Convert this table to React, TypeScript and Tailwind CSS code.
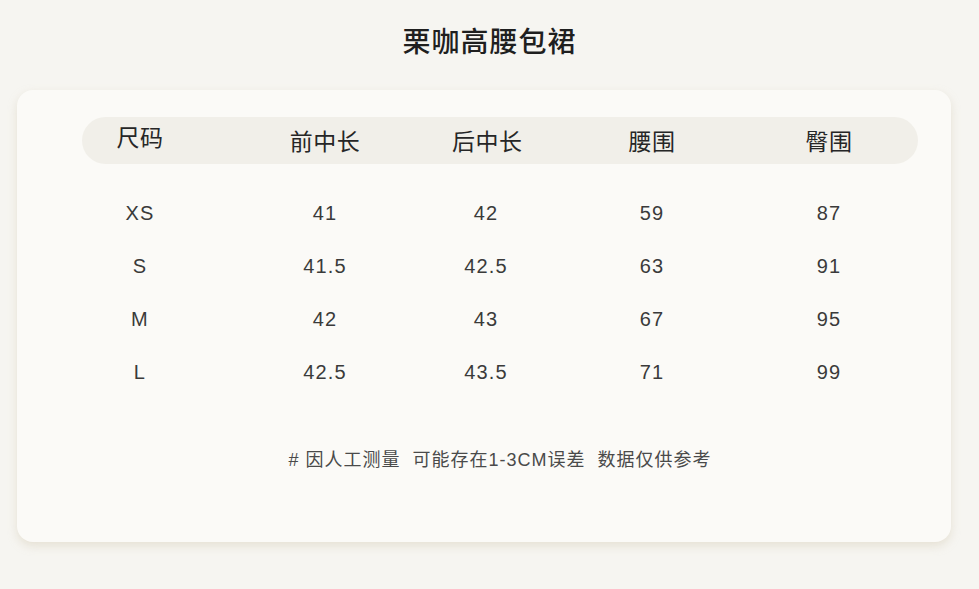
const headers = ["尺码", "前中长", "后中长", "腰围", "臀围"]

const rows = [
  ["XS", "41", "42", "59", "87"],
  ["S", "41.5", "42.5", "63", "91"],
  ["M", "42", "43", "67", "95"],
  ["L", "42.5", "43.5", "71", "99"],
]

// column widths chosen so each cell centre lines up with the picture
const cols = "grid grid-cols-[116px_254px_68px_264px_90px]"

export default function App() {
  return (
    <div
      className="min-h-[589px] w-[979px] bg-[#f6f5f1] pt-[24px] text-[#2e2e2e]"
      style={{ fontFamily: '"Liberation Sans", "Noto Sans CJK SC", sans-serif' }}
    >
      <h1 className="text-center text-[28px] font-medium leading-[38px] tracking-[1px] text-[#1f1f1f]">
        栗咖高腰包裙
      </h1>

      <div className="ml-[17px] mt-[28px] w-[934px] rounded-[16px] bg-[#fbfaf7] pb-[70px] pl-[65px] pr-[33px] pt-[27px] shadow-[0_4px_10px_rgba(200,190,160,0.35)]">
        {/* 表头 */}
        <div className={`${cols} h-[47px] items-center rounded-full bg-[#f1efe9]`}>
          {headers.map((h, i) => (
            <div
              key={h}
              className={`whitespace-nowrap text-center text-[23px] leading-[30px] tracking-[0.5px] text-[#262626] ${i === 0 ? "mb-[6px]" : "mt-[3px]"}`}
            >
              {h}
            </div>
          ))}
        </div>

        <div className="mt-[22px]">
          {rows.map((row) => (
            <div key={row[0]} className={`${cols} h-[53px] items-center`}>
              {row.map((v, i) => (
                <div
                  key={i}
                  className="whitespace-nowrap text-center text-[20px] leading-[26px] tracking-[1.2px] text-[#3a3a3a]"
                >
                  {v}
                </div>
              ))}
            </div>
          ))}
        </div>

        <p className="mt-[50px] whitespace-pre text-center text-[18px] leading-[24px] tracking-[1px] text-[#4a4a4a]">
          {"# 因人工测量  可能存在1-3CM误差  数据仅供参考"}
        </p>
      </div>
    </div>
  )
}
